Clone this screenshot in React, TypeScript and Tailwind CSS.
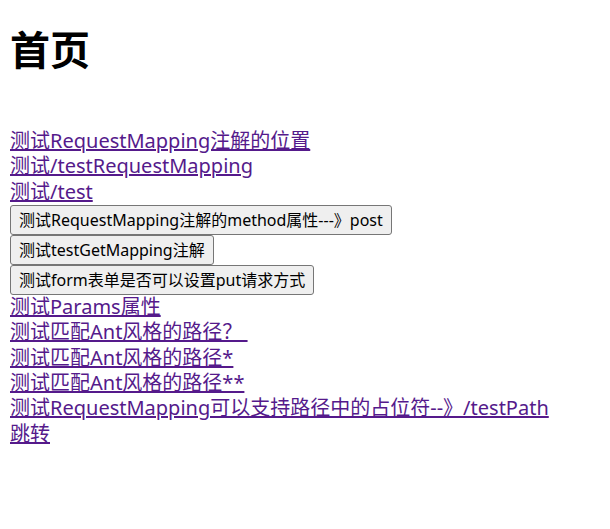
const links1 = ['测试RequestMapping注解的位置', '测试/testRequestMapping', '测试/test']

const buttons = [
  '测试RequestMapping注解的method属性---》post',
  '测试testGetMapping注解',
  '测试form表单是否可以设置put请求方式',
]

const links2 = [
  '测试Params属性',
  '测试匹配Ant风格的路径？ ',
  '测试匹配Ant风格的路径*',
  '测试匹配Ant风格的路径**',
  '测试RequestMapping可以支持路径中的占位符--》/testPath',
  '跳转',
]

function NavLink({ text }: { text: string }) {
  return (
    <div className="leading-[25.33px]">
      <a href="#" className="text-[#551a8b] underline whitespace-pre">
        {text}
      </a>
    </div>
  )
}

export default function App() {
  return (
    <div className="min-h-screen bg-white px-[10px] font-['Noto_Sans','Noto_Sans_CJK_SC',sans-serif] text-[20px] text-black">
      <h1 className="pt-[24px] text-[40px] font-bold leading-[52px]">首页</h1>

      <div className="mt-[52px]">
        {links1.map((t) => (
          <NavLink key={t} text={t} />
        ))}
      </div>

      {buttons.map((b) => (
        <form key={b} className="h-[30px]" onSubmit={(e) => e.preventDefault()}>
          <button
            type="submit"
            className="h-[30px] rounded-[3px] border border-[#767676] bg-[#efefef] px-[8px] text-[16px] leading-none text-black"
          >
            {b}
          </button>
        </form>
      ))}

      <div>
        {links2.map((t) => (
          <NavLink key={t} text={t} />
        ))}
      </div>
    </div>
  )
}
